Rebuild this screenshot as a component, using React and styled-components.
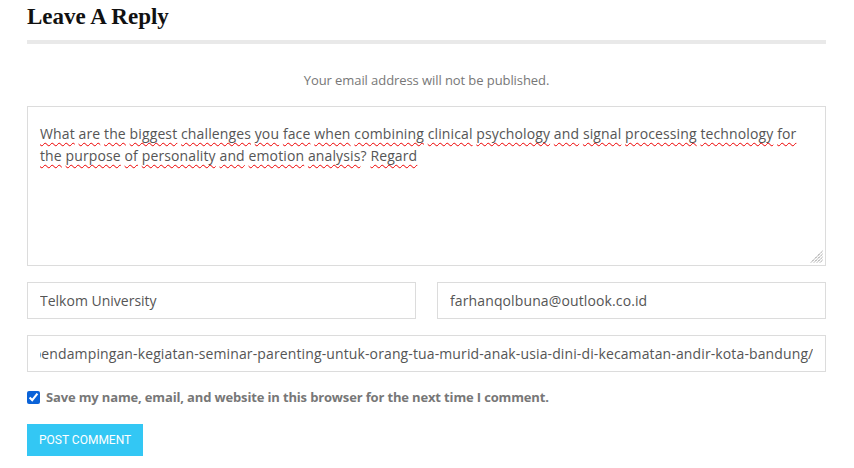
import React, { useEffect, useRef } from "react";
import styled, { createGlobalStyle } from "styled-components";

const Global = createGlobalStyle`
  html, body { margin: 0; padding: 0; background: #fff; }
  body { font-family: "Open Sans", Roboto, sans-serif; }
  * { box-sizing: border-box; }
`;

const Section = styled.section`
  width: 854px;
  padding: 0 28px 0 27px;
`;

const Title = styled.h3`
  margin: 0;
  padding-top: 5px;
  font-family: "Liberation Serif", "DejaVu Serif", serif;
  font-weight: 700;
  font-size: 23px;
  line-height: 24px;
  color: #111;
  padding-bottom: 11px;
  border-bottom: 4px solid #e9e9e9;
`;

const Notice = styled.p`
  margin: 28px 0 0;
  text-align: center;
  font-size: 13px;
  line-height: 16px;
  color: #777;
  letter-spacing: -0.08px;
`;

const Form = styled.form`
  margin-top: 18px;
  display: flex;
  flex-direction: column;
`;

const TextBox = styled.div`
  position: relative;
  height: 160px;
  border: 1px solid #dcdcdc;
  padding: 16px 12px;
  font-size: 14px;
  line-height: 22px;
  letter-spacing: 0.12px;
  color: #555;
`;

const Word = styled.span`
  text-decoration: underline wavy #e00;
  text-decoration-thickness: 1px;
  text-underline-offset: 3px;
`;

const Grip = styled.svg`
  position: absolute;
  right: 2px;
  bottom: 2px;
`;

const Row = styled.div`
  display: grid;
  grid-template-columns: 1fr 1fr;
  column-gap: 21px;
  margin-top: 16px;
`;

const Field = styled.input`
  display: block;
  width: 100%;
  height: 37px;
  border: 1px solid #dcdcdc;
  padding: 0 12px;
  font-family: inherit;
  font-size: 14px;
  letter-spacing: ${(p) => (p.$wide ? "0.12px" : "0")};
  color: #555;
  background: #fff;
  outline: none;
  margin-top: ${(p) => (p.$gap ? "16px" : "0")};
`;

const Consent = styled.label`
  display: flex;
  align-items: center;
  gap: 6px;
  margin-top: 18px;
  font-size: 13px;
  line-height: 14px;
  font-weight: 700;
  letter-spacing: -0.15px;
  color: #777;
`;

const Check = styled.input`
  margin: 0;
  width: 13px;
  height: 13px;
  accent-color: #0b63d8;
`;

const Submit = styled.button`
  align-self: flex-start;
  margin-top: 20px;
  height: 32px;
  padding: 0 12px;
  border: none;
  background: #33c7f4;
  color: #fff;
  font-family: Roboto, sans-serif;
  font-size: 12px;
  text-transform: uppercase;
`;

const text =
  "What are the biggest challenges you face when combining clinical psychology and signal processing technology for the purpose of personality and emotion analysis? Regard";

export default function App() {
  const urlRef = useRef(null);
  useEffect(() => {
    if (urlRef.current) urlRef.current.scrollLeft = urlRef.current.scrollWidth;
  }, []);
  const words = text.split(" ");
  return (
    <Section>
      <Global />
      <Title>Leave A Reply</Title>
      <Notice>Your email address will not be published.</Notice>
      <Form onSubmit={(e) => e.preventDefault()}>
        <TextBox>
          {words.map((w, i) => {
            const m = w.match(/^(.*?)([?]?)$/);
            return (
              <React.Fragment key={i}>
                <Word>{m[1]}</Word>
                {m[2]}
                {i < words.length - 1 ? " " : ""}
              </React.Fragment>
            );
          })}
          <Grip width="13" height="13" viewBox="0 0 13 13">
            <g stroke="#888" strokeWidth="1" strokeDasharray="1.5 0.6">
              <line x1="12.5" y1="1" x2="1" y2="12.5" />
              <line x1="12.5" y1="4" x2="4" y2="12.5" />
              <line x1="12.5" y1="7" x2="7" y2="12.5" />
              <line x1="12.5" y1="10" x2="10" y2="12.5" />
            </g>
          </Grip>
        </TextBox>
        <Row>
          <Field defaultValue="Telkom University" />
          <Field $wide defaultValue="farhanqolbuna@outlook.co.id" />
        </Row>
        <Field
          $gap
          $wide
          ref={urlRef}
          defaultValue="https://abdimas.telkomuniversity.ac.id/pendampingan-kegiatan-seminar-parenting-untuk-orang-tua-murid-anak-usia-dini-di-kecamatan-andir-kota-bandung/"
        />
        <Consent>
          <Check type="checkbox" defaultChecked />
          Save my name, email, and website in this browser for the next time I comment.
        </Consent>
        <Submit type="submit">Post Comment</Submit>
      </Form>
    </Section>
  );
}
